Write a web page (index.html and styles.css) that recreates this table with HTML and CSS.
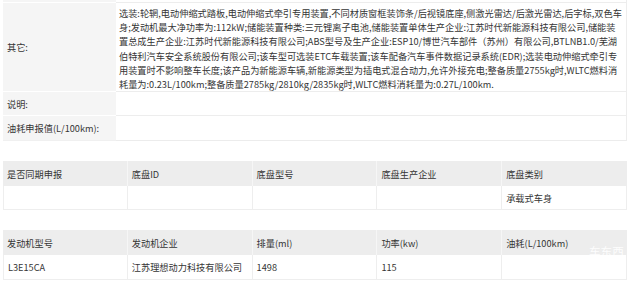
FILE: index.html
```html
<!DOCTYPE html>
<html lang="zh-CN">
<head>
<meta charset="utf-8">
<link rel="stylesheet" href="styles.css">
</head>
<body>
<div class="page">
  <table class="info">
    <colgroup><col class="c-label"><col></colgroup>
    <tr class="cut"><td class="label"></td><td class="value"></td></tr>
    <tr class="tall">
      <td class="label">其它:</td>
      <td class="value">选装:轮辋,电动伸缩式踏板,电动伸缩式牵引专用装置,不同材质窗框装饰条/后视镜底座,侧激光雷达/后激光雷达,后字标,双色车身;发动机最大净功率为:112kW;储能装置种类:三元锂离子电池,储能装置单体生产企业:江苏时代新能源科技有限公司,储能装置总成生产企业:江苏时代新能源科技有限公司;ABS型号及生产企业:ESP10/博世汽车部件（苏州）有限公司,BTLNB1.0/芜湖伯特利汽车安全系统股份有限公司;该车型可选装ETC车载装置;该车配备汽车事件数据记录系统(EDR);选装电动伸缩式牵引专用装置时不影响整车长度;该产品为新能源车辆,新能源类型为插电式混合动力,允许外接充电;整备质量2755kg时,WLTC燃料消耗量为:0.23L/100km;整备质量2785kg/2810kg/2835kg时,WLTC燃料消耗量为:0.27L/100km.</td>
    </tr>
    <tr class="row"><td class="label">说明:</td><td class="value"></td></tr>
    <tr class="row last"><td class="label">油耗申报值(L/100km):</td><td class="value"></td></tr>
  </table>

  <table class="grid">
    <tr class="head"><th>是否同期申报</th><th>底盘ID</th><th>底盘型号</th><th>底盘生产企业</th><th>底盘类别</th></tr>
    <tr class="body"><td></td><td></td><td></td><td></td><td>承载式车身</td></tr>
  </table>

  <div class="wrap">
    <table class="grid">
      <tr class="head"><th>发动机型号</th><th>发动机企业</th><th>排量(ml)</th><th>功率(kw)</th><th>油耗(L/100km)</th></tr>
      <tr class="body"><td>L3E15CA</td><td>江苏理想动力科技有限公司</td><td>1498</td><td>115</td><td></td></tr>
    </table>
    <span class="watermark">车东西</span>
  </div>
</div>
</body>
</html>
```

FILE: styles.css
```css
html, body {
  margin: 0;
  padding: 0;
  background: #ffffff;
}

body {
  font-family: "Noto Sans CJK SC", "Noto Sans", sans-serif;
  font-size: 9.2px;
  color: #353535;
}

.page {
  width: 624px;
  padding: 0 3px;
}

table {
  border-collapse: separate;
  border-spacing: 0;
  table-layout: fixed;
  width: 624px;
}

td, th {
  padding: 0;
  font-weight: normal;
  text-align: left;
  vertical-align: middle;
}

.c-label { width: 113px; }

.info .label {
  background: #f5f5f5;
  border-bottom: 1px solid #ffffff;
  padding-left: 4px;
  white-space: nowrap;
}

.info .value {
  background: #ffffff;
  border-bottom: 1px solid #ededed;
  border-right: 1px solid #ededed;
  padding-left: 3px;
  padding-right: 2px;
}

.info .cut td { height: 2px; }

.info .tall .value {
  height: 89px;
  line-height: 14.2px;
  padding-top: 3px;
  padding-bottom: 0;
  box-sizing: border-box;
  vertical-align: top;
  word-break: break-all;
}

.info .row td { height: 23px; }
.info .row.last td { height: 24px; }
.info .row.last .value { border-bottom-color: #ececec; }
.info .row.last .label { border-bottom-color: #f0f0f0; }

.grid {
  margin-top: 20px;
}

.grid .head th {
  background: #ededed;
  height: 25px;
  padding-left: 4px;
  border-right: 1px solid #f6f6f6;
}

.grid .head th:last-child { border-right: 1px solid #ededed; }

.grid .body td {
  height: 23px;
  padding-left: 4px;
  border-right: 1px solid #eeeeee;
  border-bottom: 1px solid #eeeeee;
}

.grid .body td:first-child { border-left: 1px solid #eeeeee; }

.wrap {
  position: relative;
}

.wrap .grid .head th { height: 25px; }
.wrap .grid .body td { height: 24px; }

.watermark {
  position: absolute;
  left: 586px;
  top: 13px;
  font-size: 11.6px;
  line-height: 16px;
  color: rgba(255, 255, 255, 0.9);
}
```
